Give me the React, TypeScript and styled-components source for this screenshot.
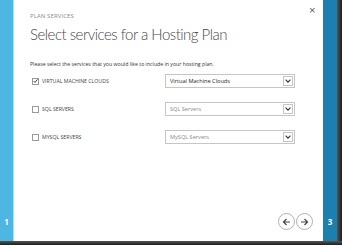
import styled, { createGlobalStyle } from "styled-components";

const GlobalStyle = createGlobalStyle`
  html, body {
    margin: 0;
    padding: 0;
    background: #ffffff;
  }
  body {
    font-family: "Open Sans", "Liberation Sans", sans-serif;
  }
`;

const Frame = styled.div`
  width: 342px;
  height: 245px;
  display: flex;
  flex-direction: column;
  background: #2b2b2b;
`;

const Body = styled.div`
  flex: 1;
  display: flex;
`;

const StepStrip = styled.div<{ $dark?: boolean }>`
  width: 14px;
  background: ${(p) => (p.$dark ? "#1c7fb0" : "#4db6e2")};
  border-right: ${(p) => (p.$dark ? "none" : "1px solid #a9e0f5")};
  display: flex;
  align-items: flex-end;
  justify-content: center;
  padding-bottom: 14px;
  box-sizing: border-box;
  color: #ffffff;
  font-size: 8px;
  font-weight: 700;
`;

const Shadow = styled.div`
  width: 5px;
  background: linear-gradient(to right, #555, #1d1d1d);
`;

const Panel = styled.div`
  flex: 1;
  background: #ffffff;
  position: relative;
  padding: 12px 0 0 16px;
  display: flex;
  flex-direction: column;
`;

const Close = styled.div`
  position: absolute;
  top: 5px;
  right: 7px;
  font-size: 9px;
  color: #555;
  font-family: "DejaVu Sans", sans-serif;
`;

const Eyebrow = styled.div`
  font-size: 6px;
  color: #8a8a8a;
  letter-spacing: 0.1px;
`;

const Title = styled.h1`
  margin: 5px 0 0 0;
  height: 21px;
  font-family: "Lato", "Open Sans", sans-serif;
  font-size: 15px;
  line-height: 18px;
  font-weight: 300;
  color: #4a4a4a;
  letter-spacing: -0.5px;
`;

const Intro = styled.p`
  margin: 14px 0 0 0;
  font-size: 5.2px;
  color: #333;
`;

const Rows = styled.div`
  margin-top: 6px;
  display: flex;
  flex-direction: column;
  gap: 14px;
`;

const Row = styled.div`
  display: flex;
  align-items: center;
  height: 14px;
`;

const Label = styled.label`
  width: 135px;
  display: flex;
  align-items: center;
  gap: 3px;
  font-size: 5.2px;
  color: #444;
  padding-left: 2px;
  box-sizing: border-box;
`;

const Box = styled.span`
  width: 7px;
  height: 7px;
  border: 1px solid #9a9a9a;
  box-sizing: border-box;
  display: inline-flex;
  align-items: center;
  justify-content: center;
`;

const Select = styled.div<{ $active?: boolean }>`
  width: 130px;
  height: 14px;
  border: 1px solid #c6c6c6;
  box-sizing: border-box;
  display: flex;
  align-items: center;
  justify-content: space-between;
  padding: 0 1px 0 4px;
  font-size: 5.6px;
  color: ${(p) => (p.$active ? "#222" : "#8a8a8a")};
`;

const Arrow = styled.span`
  width: 10px;
  height: 10px;
  border: 1px solid #c6c6c6;
  box-sizing: border-box;
  display: flex;
  align-items: center;
  justify-content: center;
`;

const Nav = styled.div`
  margin-top: auto;
  margin-bottom: 11px;
  align-self: flex-end;
  margin-right: 10px;
  display: flex;
  gap: 1px;
`;

const Circle = styled.div`
  width: 17px;
  height: 17px;
  border: 1px solid #b0b0b0;
  border-radius: 50%;
  box-sizing: border-box;
  display: flex;
  align-items: center;
  justify-content: center;
`;

const Bottom = styled.div`
  height: 4px;
  background: linear-gradient(to bottom, #555, #1d1d1d);
`;

const Chevron = () => (
  <svg width="6" height="4" viewBox="0 0 6 4">
    <path d="M0.6 0.7 L3 3.2 L5.4 0.7" fill="none" stroke="#333" strokeWidth="1.1" />
  </svg>
);

const Check = () => (
  <svg width="7" height="6" viewBox="0 0 7 6" style={{ marginTop: -1 }}>
    <path d="M0.8 3 L2.7 5 L6.4 0.6" fill="none" stroke="#333" strokeWidth="1.3" />
  </svg>
);

const ArrowIcon = ({ dir }: { dir: "left" | "right" }) => (
  <svg width="9" height="8" viewBox="0 0 9 8">
    {dir === "left" ? (
      <path d="M8 4 H1.5 M4.5 1 L1.5 4 L4.5 7" fill="none" stroke="#444" strokeWidth="1.2" />
    ) : (
      <path d="M1 4 H7.5 M4.5 1 L7.5 4 L4.5 7" fill="none" stroke="#444" strokeWidth="1.2" />
    )}
  </svg>
);

const services = [
  { label: "VIRTUAL MACHINE CLOUDS", value: "Virtual Machine Clouds", checked: true },
  { label: "SQL SERVERS", value: "SQL Servers", checked: false },
  { label: "MYSQL SERVERS", value: "MySQL Servers", checked: false },
];

export default function App() {
  return (
    <>
      <GlobalStyle />
      <Frame>
        <Body>
          <StepStrip>1</StepStrip>
          <Panel>
            <Close>×</Close>
            <Eyebrow>PLAN SERVICES</Eyebrow>
            <Title>Select services for a Hosting Plan</Title>
            <Intro>Please select the services that you would like to include in your hosting plan.</Intro>
            <Rows>
              {services.map((s) => (
                <Row key={s.label}>
                  <Label>
                    <Box>{s.checked && <Check />}</Box>
                    {s.label}
                  </Label>
                  <Select $active={s.checked}>
                    {s.value}
                    <Arrow>
                      <Chevron />
                    </Arrow>
                  </Select>
                </Row>
              ))}
            </Rows>
            <Nav>
              <Circle>
                <ArrowIcon dir="left" />
              </Circle>
              <Circle>
                <ArrowIcon dir="right" />
              </Circle>
            </Nav>
          </Panel>
          <StepStrip $dark>3</StepStrip>
          <Shadow />
        </Body>
        <Bottom />
      </Frame>
    </>
  );
}
